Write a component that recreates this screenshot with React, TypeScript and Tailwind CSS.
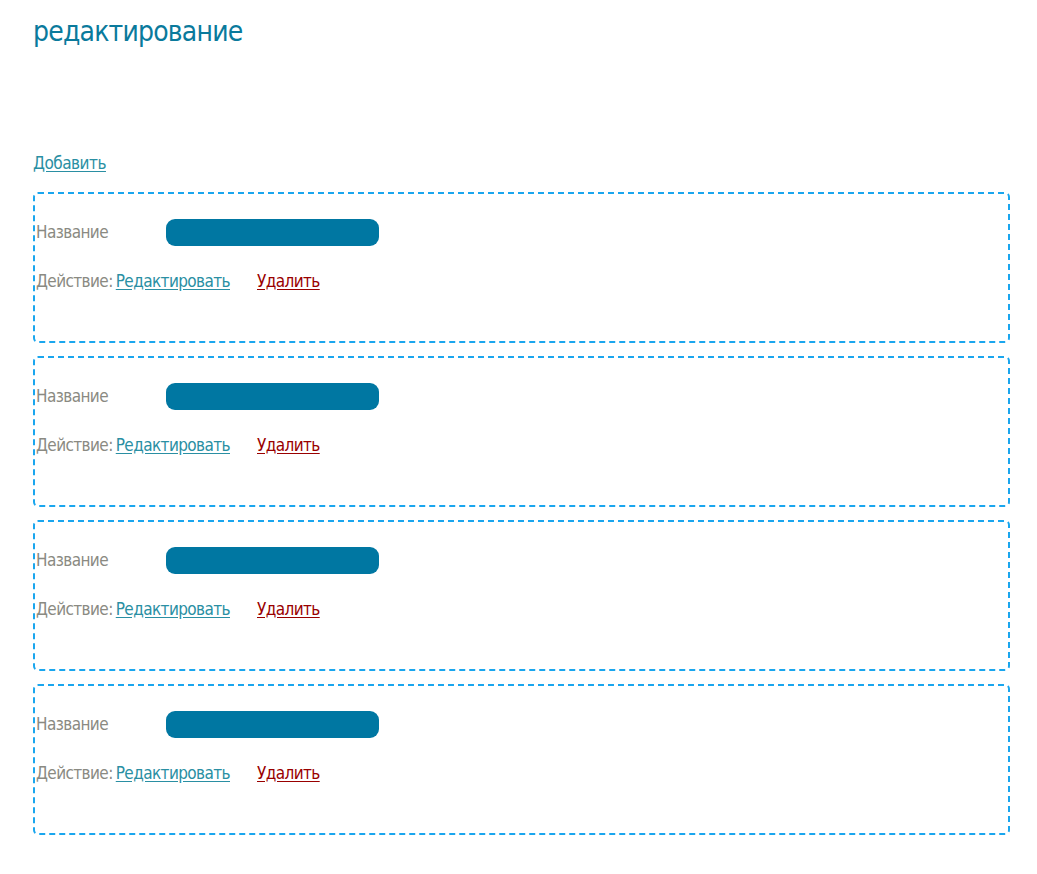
const items = [1, 2, 3, 4];

function Card() {
  return (
    <div className="h-[151px] rounded-[5px] border-2 border-dashed border-[#1aa6ee] pl-[1px] pt-[25px] tracking-[-0.6px]">
      <div className="flex h-[28px] items-center">
        <span className="w-[130px] text-[17px] text-[#8a8a82]">Название</span>
        <span className="block h-[27px] w-[213px] rounded-[9px] bg-[#0077a2]" />
      </div>
      <div className="mt-[22px] flex items-center text-[17px]">
        <span className="text-[#8a8a82]">Действие:</span>
        <a href="#" className="ml-[3px] text-[#2a8fa3] underline underline-offset-2">
          Редактировать
        </a>
        <a href="#" className="ml-[27px] text-[#990000] underline underline-offset-2">
          Удалить
        </a>
      </div>
    </div>
  );
}

export default function App() {
  return (
    <div
      className="min-h-[874px] bg-white px-[33px] pt-[12px]"
      style={{ fontFamily: '"Liberation Sans Narrow", "DejaVu Sans Condensed", "Liberation Sans", sans-serif' }}
    >
      <h1 className="text-[28px] leading-[40px] tracking-[-0.8px] text-[#0a7a9c]">редактирование</h1>

      <div className="mt-[99px]">
        <a href="#" className="text-[17px] tracking-[-0.5px] text-[#2a8fa3] underline underline-offset-2">
          Добавить
        </a>
      </div>

      <div className="mt-[15px] flex w-[977px] flex-col gap-[13px]">
        {items.map((i) => (
          <Card key={i} />
        ))}
      </div>
    </div>
  );
}
